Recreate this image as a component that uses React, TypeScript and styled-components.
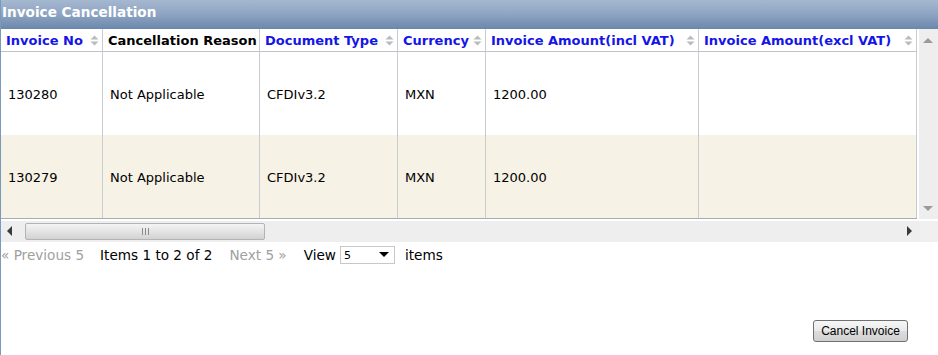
import React from 'react';
import styled, { createGlobalStyle } from 'styled-components';

const GlobalStyle = createGlobalStyle`
  html, body {
    margin: 0;
    padding: 0;
    background: #ffffff;
  }
  body {
    font-family: "DejaVu Sans", Verdana, sans-serif;
    font-size: 13px;
    color: #000000;
  }
`;

const Panel = styled.div`
  width: 938px;
  height: 355px;
  box-sizing: border-box;
  border-left: 1px solid #7b98bd;
  display: flex;
  flex-direction: column;
  overflow: hidden;
`;

const TitleBar = styled.div`
  height: 29px;
  box-sizing: border-box;
  padding: 4px 0 0 1px;
  background: linear-gradient(to bottom, #a6b8d0 0%, #8ea4c2 50%, #6a87ab 100%);
  color: #ffffff;
  font-weight: 700;
  font-size: 13.6px;
  display: flex;
  align-items: flex-start;
`;

const GridArea = styled.div`
  display: flex;
`;

const TableBox = styled.div`
  width: 918px;
  display: flex;
  flex-direction: column;
`;

const Grid = styled.div`
  display: grid;
  grid-template-columns: 102px 157px 138px 88px 213px 218px;
  width: 916px;
  border-bottom: 1px solid #a7adb3;
`;

const HeadCell = styled.div<{ $sortable?: boolean }>`
  height: 23px;
  box-sizing: border-box;
  padding: 0 3px 0 5px;
  border-right: 1px solid #c6ccd2;
  border-bottom: 1px solid #c0c4c8;
  display: flex;
  align-items: center;
  justify-content: space-between;
  font-weight: 700;
  font-size: 13px;
  white-space: nowrap;
  color: ${(p) => (p.$sortable ? '#1515e6' : '#000000')};
`;

const Cell = styled.div<{ $alt?: boolean }>`
  height: 83px;
  box-sizing: border-box;
  padding: 1px 0 0 7px;
  border-right: 1px solid #c6ccd2;
  background: ${(p) => (p.$alt ? '#f6f2e6' : '#ffffff')};
  display: flex;
  align-items: center;
  white-space: nowrap;
`;

const VScroll = styled.div`
  width: 19px;
  margin-left: 1px;
  background: #eeeeee;
  display: flex;
  flex-direction: column;
  justify-content: space-between;
  align-items: center;
  padding: 9px 0 7px;
  box-sizing: border-box;
`;

const HScroll = styled.div`
  height: 21px;
  margin-top: 2px;
  display: flex;
  background: #eeeeee;
`;

const HTrack = styled.div`
  width: 918px;
  display: flex;
  align-items: center;
  padding: 0 0 0 6px;
  box-sizing: border-box;
`;

const Thumb = styled.div`
  width: 240px;
  height: 17px;
  margin-left: 12px;
  box-sizing: border-box;
  border: 1px solid #b4b4b4;
  border-radius: 2px;
  background: linear-gradient(to bottom, #f4f4f4 0%, #e4e4e4 50%, #d2d2d2 100%);
  display: flex;
  align-items: center;
  justify-content: center;
`;

const Grip = styled.div`
  display: flex;
  gap: 2px;
  & span {
    width: 1px;
    height: 7px;
    background: #8a8a8a;
  }
`;

const Spacer = styled.div<{ $w?: number }>`
  flex: ${(p) => (p.$w ? '0 0 auto' : '1')};
  width: ${(p) => (p.$w ? `${p.$w}px` : 'auto')};
`;

const Corner = styled.div`
  width: 18px;
  margin-left: 1px;
  background: #f0f0f0;
`;

const Pager = styled.div`
  display: flex;
  align-items: center;
  height: 26px;
  white-space: nowrap;
  font-size: 13.6px;
`;

const PageLink = styled.span<{ $gap: number }>`
  color: #a0a0a0;
  margin-right: ${(p) => p.$gap}px;
`;

const PageText = styled.span<{ $gap: number }>`
  margin-right: ${(p) => p.$gap}px;
`;

const SelectBox = styled.div`
  width: 55px;
  height: 18px;
  box-sizing: border-box;
  border: 1px solid #c8c8c8;
  display: flex;
  align-items: center;
  justify-content: space-between;
  padding: 0 4px 0 3px;
  font-size: 11px;
  margin-right: 10px;
`;

const Footer = styled.div`
  flex: 1;
  display: flex;
  justify-content: flex-end;
  align-items: flex-end;
  padding: 0 30px 13px 0;
`;

const CancelButton = styled.button`
  width: 95px;
  height: 22px;
  border: 1px solid #707070;
  border-radius: 3px;
  background: linear-gradient(to bottom, #f6f6f6 0%, #eaeaea 48%, #dcdcdc 52%, #d0d0d0 100%);
  font-family: "Liberation Sans", Arial, sans-serif;
  font-size: 12px;
  color: #000000;
  padding: 0;
`;

const SortIcon = () => (
  <svg width="9" height="11" viewBox="0 0 9 11">
    <path d="M4.5 0.5 L8.5 4.5 L0.5 4.5 Z" fill="#b8bcc0" />
    <path d="M0.5 6.5 L8.5 6.5 L4.5 10.5 Z" fill="#b8bcc0" />
  </svg>
);

const Arrow = ({ dir, color = '#8c8c8c' }: { dir: 'up' | 'down' | 'left' | 'right'; color?: string }) => {
  const paths: Record<string, string> = {
    up: 'M0 5 L5 0 L10 5 Z',
    down: 'M0 0 L10 0 L5 5 Z',
    left: 'M5 0 L5 10 L0 5 Z',
    right: 'M0 0 L5 5 L0 10 Z',
  };
  const horiz = dir === 'left' || dir === 'right';
  return (
    <svg width={horiz ? 6 : 11} height={horiz ? 11 : 6} viewBox={horiz ? '0 0 6 11' : '0 0 11 6'}>
      <path d={paths[dir]} fill={color} />
    </svg>
  );
};

const columns = [
  { label: 'Invoice No', sortable: true },
  { label: 'Cancellation Reason', sortable: false },
  { label: 'Document Type', sortable: true },
  { label: 'Currency', sortable: true },
  { label: 'Invoice Amount(incl VAT)', sortable: true },
  { label: 'Invoice Amount(excl VAT)', sortable: true },
];

const rows = [
  ['130280', 'Not Applicable', 'CFDIv3.2', 'MXN', '1200.00', ''],
  ['130279', 'Not Applicable', 'CFDIv3.2', 'MXN', '1200.00', ''],
];

export default function App() {
  return (
    <>
      <GlobalStyle />
      <Panel>
        <TitleBar>Invoice Cancellation</TitleBar>
        <GridArea>
          <TableBox>
            <Grid>
              {columns.map((c) => (
                <HeadCell key={c.label} $sortable={c.sortable}>
                  <span>{c.label}</span>
                  {c.sortable && <SortIcon />}
                </HeadCell>
              ))}
              {rows.map((r, i) =>
                r.map((v, j) => (
                  <Cell key={`${i}-${j}`} $alt={i % 2 === 1}>
                    {v}
                  </Cell>
                ))
              )}
            </Grid>
          </TableBox>
          <VScroll>
            <Arrow dir="up" color="#9a9a9a" />
            <Arrow dir="down" color="#9a9a9a" />
          </VScroll>
        </GridArea>
        <HScroll>
          <HTrack>
            <Arrow dir="left" color="#3a3a3a" />
            <Thumb>
              <Grip>
                <span />
                <span />
                <span />
              </Grip>
            </Thumb>
            <Spacer />
            <Arrow dir="right" color="#3a3a3a" />
            <Spacer $w={6} />
          </HTrack>
          <Corner />
        </HScroll>
        <Pager>
          <PageLink $gap={16}>« Previous 5</PageLink>
          <PageText $gap={17}>Items 1 to 2 of 2</PageText>
          <PageLink $gap={17}>Next 5 »</PageLink>
          <PageText $gap={4}>View</PageText>
          <SelectBox>
            <span>5</span>
            <Arrow dir="down" color="#000000" />
          </SelectBox>
          <PageText $gap={0}>items</PageText>
        </Pager>
        <Footer>
          <CancelButton>Cancel Invoice</CancelButton>
        </Footer>
      </Panel>
    </>
  );
}
